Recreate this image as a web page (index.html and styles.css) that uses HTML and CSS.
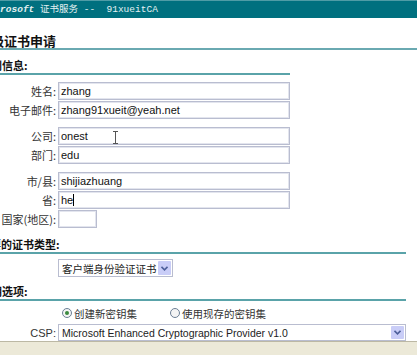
FILE: index.html
```html
<!DOCTYPE html>
<html lang="zh-CN">
<head>
<meta charset="UTF-8" />
<title>高级证书申请</title>
<link rel="stylesheet" href="styles.css">
</head>
<body>

<div class="topbar"><span class="brand">Microsoft</span> 证书服务 --  91xueitCA</div>

<h1 class="title">高级证书申请</h1>

<h2 class="section short">识别信息:</h2>

<div class="fields">
  <div class="group">
    <div class="row"><label>姓名:</label><div class="field">zhang</div></div>
    <div class="row"><label>电子邮件:</label><div class="field">zhang91xueit@yeah.net</div></div>
  </div>
  <div class="group">
    <div class="row"><label>公司:</label><div class="field">onest<span class="ibeam"></span></div></div>
    <div class="row"><label>部门:</label><div class="field">edu</div></div>
  </div>
  <div class="group">
    <div class="row"><label>市/县:</label><div class="field">shijiazhuang</div></div>
    <div class="row"><label>省:</label><div class="field">he<span class="caret"></span></div></div>
    <div class="row"><label>国家(地区):</label><div class="field tiny"></div></div>
  </div>
</div>

<h2 class="section two">需要的证书类型:</h2>

<div class="type-row">
  <div class="select type">
    <span class="select-text">客户端身份验证证书</span>
    <span class="arrow"><svg width="7" height="5" viewBox="0 0 7 5"><path d="M0.5 0.8 L3.5 3.8 L6.5 0.8" fill="none" stroke="#4d5f9a" stroke-width="1.6"/></svg></span>
  </div>
</div>

<h2 class="section three">密钥选项:</h2>

<div class="radios">
  <span class="radio on"></span><span class="radio-label">创建新密钥集</span>
  <span class="radio"></span><span class="radio-label">使用现存的密钥集</span>
</div>

<div class="row csp-row">
  <label>CSP:</label>
  <div class="select csp">
    <span class="select-text latin">Microsoft Enhanced Cryptographic Provider v1.0</span>
    <span class="arrow"><svg width="7" height="5" viewBox="0 0 7 5"><path d="M0.5 0.8 L3.5 3.8 L6.5 0.8" fill="none" stroke="#4d5f9a" stroke-width="1.6"/></svg></span>
  </div>
</div>

<div class="status"></div>

</body>
</html>
```

FILE: styles.css
```css
body {
  margin: 0;
  background: #fff;
  color: #2a2a2a;
  font-family: "Noto Sans CJK SC", sans-serif;
  overflow: hidden;
}

/* title band */
.topbar {
  height: 17px;
  border-top: 1px solid #4f9ca6;
  background: #00707f;
  color: #e4f1f2;
  font: 9.5px/17px "Liberation Mono", "Noto Sans CJK SC", monospace;
  white-space: pre;
  overflow: hidden;
}
.brand {
  font-weight: bold;
  font-style: italic;
  margin-left: -17px;
}

.title {
  margin: 15px 0 0;
  font-size: 13px;
  line-height: 15px;
  font-weight: bold;
  color: #111;
  text-indent: -22px;
  border-bottom: 2px solid #6aa9b1;
}

.section {
  width: 406px;
  margin: 8px 0 0;
  font-size: 11px;
  line-height: 14px;
  padding-bottom: 1px;
  font-weight: bold;
  color: #111;
  text-indent: -20px;
  border-bottom: 2px solid #5aa3a9;
}
.section.short { width: 290px; }
.section.two { margin-top: 9px; text-indent: -21px; }
.section.three { margin-top: 7px; }

/* form rows */
.fields {
  margin-top: 7px;
  display: flex;
  flex-direction: column;
  gap: 8px;
}
.group {
  display: flex;
  flex-direction: column;
  gap: 1px;
}
.row {
  display: flex;
  align-items: center;
  height: 18px;
}
.row label {
  flex: none;
  width: 56px;
  margin-right: 2px;
  display: flex;
  justify-content: flex-end;
  white-space: nowrap;
  font-size: 11px;
  color: #333;
}
.field {
  position: relative;
  box-sizing: border-box;
  width: 232px;
  height: 18px;
  padding: 0 2px;
  border: 1px solid #b9bdd0;
  box-shadow: inset 0 0 0 1px #e3e5ee;
  font: 11px/16px "Liberation Sans", sans-serif;
  color: #111;
}
.field.tiny { width: 39px; }
.caret {
  display: inline-block;
  width: 1px;
  height: 12px;
  background: #000;
  vertical-align: -2px;
}
.ibeam {
  position: absolute;
  left: 54px;
  top: 3px;
  width: 5px;
  height: 13px;
  border-top: 1px solid #555;
  border-bottom: 1px solid #555;
  box-sizing: border-box;
}
.ibeam::after {
  content: "";
  position: absolute;
  left: 2px;
  top: 0;
  width: 1px;
  height: 11px;
  background: #555;
}

/* selects */
.type-row {
  margin-top: 5px;
  padding-left: 58px;
}
.select {
  box-sizing: border-box;
  display: flex;
  align-items: center;
  height: 18px;
  padding: 1px 1px 1px 3px;
  border: 1px solid #b9bdd0;
  background: #fff;
}
.select.type { width: 115px; }
.select-text {
  font-size: 10.5px;
  white-space: nowrap;
  color: #222;
}
.select-text.latin {
  font-family: "Liberation Sans", sans-serif;
  font-size: 10.5px;
}
.arrow {
  margin-left: auto;
  flex: none;
  width: 13px;
  height: 100%;
  display: flex;
  align-items: center;
  justify-content: center;
  background: #c9cdf7;
  border-radius: 1px;
}

.radios {
  margin-top: 3px;
  height: 18px;
  padding-left: 62px;
  display: flex;
  align-items: center;
  font-size: 10.5px;
  color: #333;
}
.radio {
  box-sizing: border-box;
  width: 10px;
  height: 10px;
  margin-right: 2px;
  border: 1px solid #6c7f96;
  border-radius: 50%;
  background: #f4f4f4;
  display: flex;
  align-items: center;
  justify-content: center;
}
.radio.on::after {
  content: "";
  width: 4px;
  height: 4px;
  border-radius: 50%;
  background: #3a8a3e;
}
.radio-label { margin-right: 33px; }

.csp-row {
  margin-top: 2px;
  height: 17px;
}
.csp-row label {
  font-family: "Liberation Sans", sans-serif;
}
.select.csp {
  width: 348px;
  height: 17px;
}

.status {
  height: 20px;
  border-top: 1px solid #bcb8a4;
  background: #ece9d8;
}
```
